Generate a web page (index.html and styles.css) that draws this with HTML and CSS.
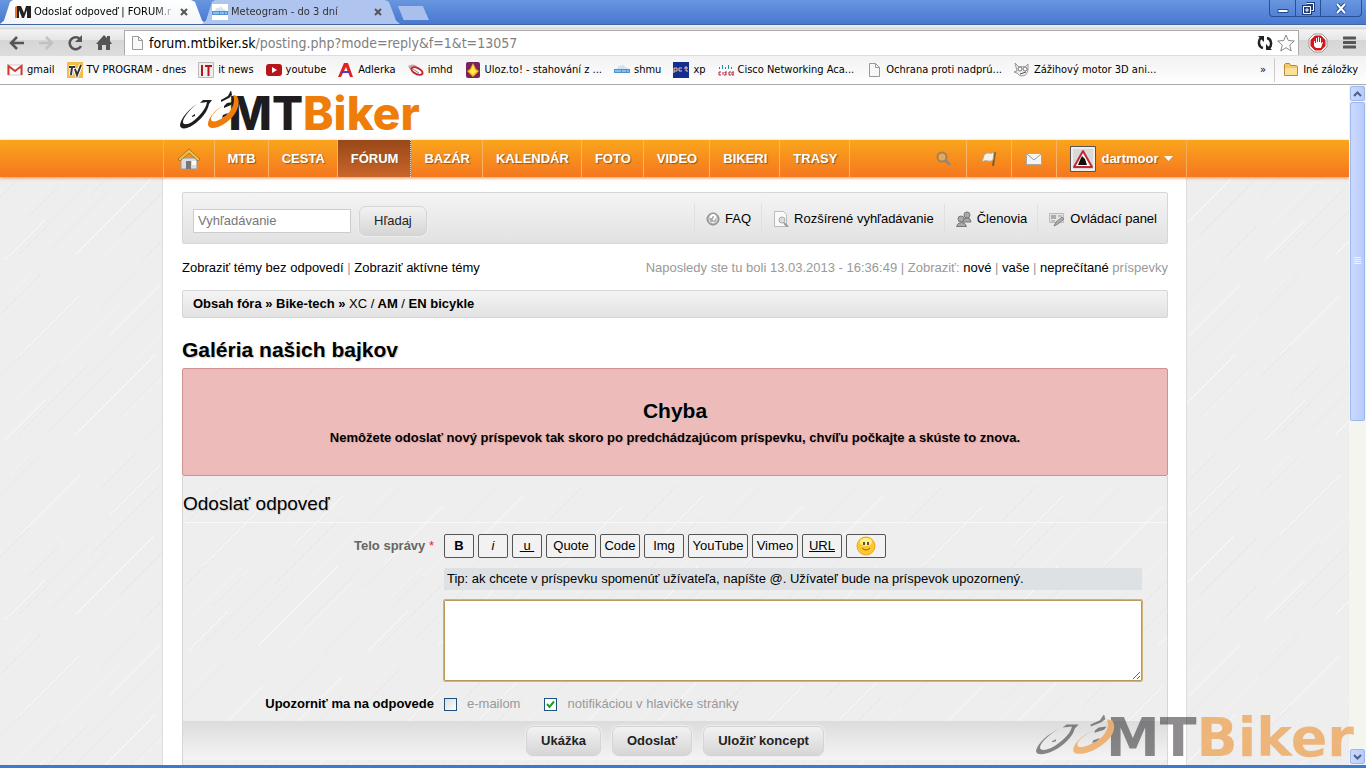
FILE: index.html
```
<!DOCTYPE html>
<html lang="sk">

<head>
    <meta charset="UTF-8">
    <meta name="viewport" content="width=device-width, initial-scale=1.0">
    <title>Odoslať odpoveď | FORUM.mtbiker.sk</title>
    <link rel="stylesheet" href="styles.css">
</head>

<body>
    <!-- shared shapes -->
    <svg class="defs" width="0" height="0">
        <symbol id="bike" viewBox="0 0 60 40">
            <path class="dark" d="M17 13C9 18 1 27 0 34c0 5 7 4 13 0 8-5 15-14 16-21l3-4-9 0-3 3 7-1c-1 7-8 15-15 20-5 3-9 3-9 0 0-4 6-12 14-18z" />
            <path class="dark" d="M12 25l3-2 0 2-3 1zM41 9l7-4 3-6 1 5-3 3-8 4zM44 15l3-3 6-1-2 3-7 3zM43 24l5-2-2 3-4 2z" />
            <path class="accent" d="M43 15c-7 3-14 11-15 17-1 7 8 6 16 1C55 26 62 14 57 5l-4-1c3 7-1 16-9 22-7 5-13 6-13 2 0-3 5-9 12-13z" />
        </symbol>
        <symbol id="page" viewBox="0 0 16 16">
            <path d="M3.500 1.500h6l4 4v9h-10z" fill="#f8f8f8" stroke="#999" />
            <path d="M9.500 1.500v4h4" fill="none" stroke="#999" />
        </symbol>
        <symbol id="shmu" viewBox="0 0 16 16">
            <path d="M3 7q1-4 4-3 2-3 4 1 3 0 3 3z" fill="#cfe4f4" />
            <path d="M0 7h16v4H0z" fill="#4f93d4" />
            <path d="M1 9h2m1-1v2m2-2v2m2-1h2m1-1v2m2-1h2" stroke="#cfe4f4" />
        </symbol>
        <symbol id="close" viewBox="0 0 8 8">
            <path d="M1 1l6 6M7 1L1 7" stroke="#555" stroke-width="2" />
        </symbol>
    </svg>

    <div class="titlebar">
        <div class="tab active">
            <svg width="16" height="14" viewBox="0 0 16 14"><path d="M0 2l2-1 1 12H0z" fill="#e77b1c" /><path d="M2 1h4l3 7 2-7h5v12h-4V5l-3 8H7L4 5v8H2z" fill="#222" /></svg>
            <span class="tab-title">Odoslať odpoveď | FORUM.r</span>
            <button class="tab-close" aria-label="Zavrieť"><svg width="8" height="8"><use href="#close" /></svg></button>
        </div>
        <div class="tab">
            <svg class="white" width="16" height="16"><use href="#shmu" /></svg>
            <span class="tab-title">Meteogram - do 3 dní</span>
            <button class="tab-close" aria-label="Zavrieť"><svg width="8" height="8"><use href="#close" /></svg></button>
        </div>
        <button class="new-tab" aria-label="Nová karta"></button>
        <div class="window-buttons">
            <button aria-label="Minimalizovať"><svg width="12" height="12"><path d="M1 7.500h10v3H1z" fill="#fff" stroke="#24498f" /></svg></button>
            <button aria-label="Obnoviť"><svg width="13" height="13"><path d="M4.500 1.500h7v7h-2M1.500 4.500h7v7h-7zM4 7h2v2H4z" fill="none" stroke="#203f7d" stroke-width="3" /><path d="M4.500 1.500h7v7h-2M1.500 4.500h7v7h-7zM4 7h2v2H4z" fill="none" stroke="#fff" /></svg></button>
            <button class="wide" aria-label="Zavrieť"><svg width="12" height="11"><path d="M2 1l8 9M10 1L2 10" stroke="#24498f" stroke-width="4" /><path d="M2 1l8 9M10 1L2 10" stroke="#fff" stroke-width="2" /></svg></button>
        </div>
    </div>

    <div class="toolbar">
        <button aria-label="Späť"><svg width="16" height="14"><path d="M15 7H3M8 1L2 7l6 6" fill="none" stroke="#555" stroke-width="2.500" /></svg></button>
        <button aria-label="Dopredu"><svg width="16" height="14"><path d="M1 7h12M8 1l6 6-6 6" fill="none" stroke="#c2c2c2" stroke-width="2.500" /></svg></button>
        <button aria-label="Obnoviť"><svg width="16" height="16"><path d="M13 4a6 6 0 1 0 1 7" fill="none" stroke="#555" stroke-width="2.500" /><path d="M15 0v7H8z" fill="#555" /></svg></button>
        <button aria-label="Domov"><svg width="16" height="16"><path d="M8 0l3 3V1h3v5l2 3h-2v6h-4v-5H6v5H2V9H0z" fill="#555" /></svg></button>
        <div class="omnibox">
            <svg width="16" height="16"><use href="#page" /></svg>
            <a class="url" href="#"><span>forum.mtbiker.sk</span>/posting.php?mode=reply&amp;f=1&amp;t=13057</a>
            <svg width="16" height="16"><path d="M6 13C1 12 1 5 4 3M10 3c5 1 5 8 2 10" fill="none" stroke="#222" stroke-width="2.500" /><path d="M1 1h6v6zM15 15H9V9z" fill="#222" /></svg>
            <svg width="18" height="18"><path d="M9 1l2.300 5.500 6 .5-4.600 4 1.500 6L9 13.700 3.800 17l1.500-6L.7 7l6-.5z" fill="#fff" stroke="#888" /></svg>
        </div>
        <button class="adblock" aria-label="AdBlock"><svg width="20" height="20"><path d="M6 1h8l5 5v8l-5 5H6l-5-5V6z" fill="#fff" stroke="#999" /><path d="M7 2.500h6L17.500 7v6L13 17.500H7L2.500 13V7z" fill="#d5141c" /><path d="M6 8h1v2h1V5h1v4h1V4h1v5h1V5h1v6l1-2h1l-2 6H8l-2-2z" fill="#fff" /></svg></button>
        <button class="menu" aria-label="Menu"><svg width="13" height="13"><path d="M1 2h11M1 6.500h11M1 11h11" stroke="#555" stroke-width="3" stroke-linecap="round" /></svg></button>
    </div>

    <div class="bookmarks">
        <a href="#"><svg width="16" height="16"><path d="M1 3h14v10H1z" fill="#fff" stroke="#ccc" /><path d="M1.500 13V4L8 9l6.500-5v9" fill="none" stroke="#d33a2f" stroke-width="2" /></svg>gmail</a>
        <a href="#"><svg width="16" height="16"><path d="M0 0h16v16H0z" fill="#f2bd4a" /><path d="M2 5h6M5 5L4 13M8 7l2 6 4-10" fill="none" stroke="#fff" stroke-width="4" /><path d="M2 5h6M5 5L4 13M8 7l2 6 4-10" fill="none" stroke="#333" stroke-width="2" /></svg>TV PROGRAM - dnes</a>
        <a href="#"><svg width="16" height="16"><path d="M.5.5h15v15H.5z" fill="#eee" stroke="#bbb" /><path d="M4 3v11M7 4h7M10.500 4v10" stroke="#b5151d" stroke-width="2" /></svg>it news</a>
        <a href="#"><svg width="16" height="16"><rect y="2" width="16" height="12" rx="3" fill="#b8141b" /><path d="M6 5l5 3-5 3z" fill="#fff" /></svg>youtube</a>
        <a href="#"><svg width="16" height="16"><path d="M0 15L6 1h4l5 14h-3L8 5 3 15z" fill="#e42222" /><path d="M4 9h8v2H3z" fill="#4d3ccc" /></svg>Adlerka</a>
        <a href="#"><svg width="16" height="16"><path d="M0 4q5-3 9 0L2 8z" fill="#c9a9a5" /><ellipse cx="9" cy="9" rx="6" ry="3" transform="rotate(28 9 9)" fill="#fff" stroke="#c3272e" stroke-width="2" /><path d="M5 7l6 4" stroke="#888" /></svg>imhd</a>
        <a href="#"><svg width="16" height="16"><rect x="1" width="14" height="16" rx="2" fill="#77245d" /><path d="M8 1l3 6 3 2-6 6-6-6 3-2z" fill="#f6b318" /><path d="M8 3l2 5 2 1-4 4-4-4 2-1z" fill="#ffee45" /></svg>Uloz.to! - stahování z ...</a>
        <a href="#"><svg width="16" height="16"><use href="#shmu" /></svg>shmu</a>
        <a href="#"><svg width="16" height="16"><path d="M0 0h16v16H0z" fill="#102d91" /><path d="M1 11V6h3v3H1M9 6H6v3h3M11 6h4M13 4v5h2" fill="none" stroke="#f5c3a5" /></svg>xp</a>
        <a href="#"><svg width="16" height="16"><path d="M1.500 5v2M4.500 3v4M7.500 5v2M10.500 3v4M13.500 5v2" stroke="#258ba3" /><path d="M3 10H1v3h2M5 10v3M9 10H7v1h1v2H6M13 10h-2v3h2M14 10h2v3h-2z" fill="none" stroke="#b62035" /></svg>Cisco Networking Aca...</a>
        <a href="#"><svg width="16" height="16"><use href="#page" /></svg>Ochrana proti nadprú...</a>
        <a href="#"><svg width="16" height="16"><path d="M1 1l4 4q4-1 6 0l3-3v6q-1 6-6 6-3 0-5-3l-3-1 3-1z" fill="#eee" stroke="#999" /><circle cx="6" cy="7" r="2" fill="#fff" stroke="#777" /><circle cx="11" cy="7" r="2" fill="#fff" stroke="#777" /><path d="M6 12l6-2" stroke="#555" /></svg>Zážihový motor 3D ani...</a>
        <button class="more" aria-label="Ďalšie záložky">»</button>
        <a class="other" href="#"><svg width="16" height="16"><path d="M1.500 13.500v-11l1-1h4l1 2h6l1 1v9z" fill="#f9c866" stroke="#b98a35" /><path d="M2 6h12v7H2z" fill="#fce09a" /></svg>Iné záložky</a>
    </div>

    <div class="viewport">
        <div class="page">
            <header class="header">
                <a class="logo" href="#">
                    <svg width="60" height="40"><use href="#bike" /></svg>
                    <span class="logo-text">MT<b>Biker</b></span>
                </a>
            </header>

            <nav class="nav">
                <div class="nav-inner">
                    <a class="home" href="#" aria-label="Domov"><svg width="24" height="24"><path d="M4 11h16v11H4z" fill="#ddd" stroke="#999" /><path d="M9 14h5v8H9z" fill="#777" /><path d="M15 14h4v4h-4z" fill="#fff" /><path d="M1 12L12 2l11 10-2 2-9-8-9 8z" fill="#f5bd3f" stroke="#9b7a35" /></svg></a>
                    <a href="#">MTB</a>
                    <a href="#">CESTA</a>
                    <a class="selected" href="#">FÓRUM</a>
                    <a href="#">BAZÁR</a>
                    <a href="#">KALENDÁR</a>
                    <a href="#">FOTO</a>
                    <a href="#">VIDEO</a>
                    <a href="#">BIKERI</a>
                    <a href="#">TRASY</a>
                    <div class="nav-right">
                        <a href="#" aria-label="Hľadať"><svg width="16" height="16"><path d="M9 9l5 5" stroke="#8a8a8a" stroke-width="3" /><circle cx="6" cy="6" r="4.500" fill="#e2a860" stroke="#a3834f" stroke-width="2" /></svg></a>
                        <a href="#" aria-label="Upozornenia"><svg width="16" height="16"><path d="M14 1l-2 14" stroke="#8c5a1e" stroke-width="2" /><path d="M3 4q3-3 5-2t5-1l-1 8q-2 2-5 1T1 11z" fill="#f5f1e8" stroke="#baa27f" /></svg></a>
                        <a href="#" aria-label="Správy"><svg width="16" height="16"><path d="M.5 2.500h15v11H.5z" fill="#f4f4f4" stroke="#aaa" /><path d="M1 3l7 6 7-6" fill="none" stroke="#999" /></svg></a>
                        <a class="user" href="#">
                            <svg width="26" height="26"><path d="M.5.5h25v25H.5z" fill="#ddd" stroke="#555" /><path d="M2 2h22v22H2z" fill="#d9d9d9" stroke="#fff" /><path d="M13 5l9 16H4z" fill="#fff" stroke="#c22732" stroke-width="2" stroke-linejoin="round" /><path d="M8 19l2-5 2-4 3 3 2 6z" fill="#111" /></svg>
                            <span>dartmoor</span>
                            <svg width="9" height="5"><path d="M0 0h9L4.500 5z" fill="#fff" /></svg>
                        </a>
                    </div>
                </div>
            </nav>

            <main class="container">
                <div class="search-bar">
                    <form class="search">
                        <input type="text" placeholder="Vyhľadávanie" aria-label="Vyhľadávanie">
                        <button type="button" class="btn">Hľadaj</button>
                    </form>
                    <div class="links">
                        <a href="#"><svg width="14" height="14"><circle cx="7" cy="7" r="6" fill="#aaa" stroke="#888" /><circle cx="7" cy="7" r="4" fill="none" stroke="#ddd" /><path d="M5 6q0-3 2-3t2 2-2 3M7 10v1" fill="none" stroke="#fff" stroke-width="2" /></svg>FAQ</a>
                        <a href="#"><svg width="16" height="16"><path d="M1.500.5h9l3 3v12h-12z" fill="#fafafa" stroke="#bbb" /><circle cx="9" cy="9" r="3" fill="#ddd" stroke="#aaa" /><path d="M11 12l4 4" stroke="#999" stroke-width="2" /></svg>Rozšírené vyhľadávanie</a>
                        <a href="#"><svg width="16" height="16"><g fill="#aaa" stroke="#777"><circle cx="11" cy="4" r="3" /><path d="M6 11q1-4 5-4t4 4z" /><circle cx="5" cy="8" r="3" /><path d="M.5 15.500q1-4 5-4t5 4z" /></g></svg>Členovia</a>
                        <a href="#"><svg width="16" height="16"><path d="M.5 2.500h14v9H.5z" fill="#e4e4e4" stroke="#bbb" /><path d="M2 4h5v4H2z" fill="#aaa" /><path d="M9 5h4M2 10h4" stroke="#999" /><path d="M5 15l2-4 6-5 2 2-6 5z" fill="#aaa" stroke="#888" /></svg>Ovládací panel</a>
                    </div>
                </div>

                <div class="info">
                    <p><a href="#">Zobraziť témy bez odpovedí</a> | <a href="#">Zobraziť aktívne témy</a></p>
                    <p>Naposledy ste tu boli 13.03.2013 - 16:36:49 | Zobraziť: <a href="#">nové</a> | <a href="#">vaše</a> | <a href="#">neprečítané</a> príspevky</p>
                </div>

                <div class="breadcrumb"><a href="#">Obsah fóra</a> » <a href="#">Bike-tech</a> » <a href="#"><span>XC /</span> AM <span>/</span> EN bicykle</a></div>

                <h2>Galéria našich bajkov</h2>

                <div class="error">
                    <h2>Chyba</h2>
                    <p>Nemôžete odoslať nový príspevok tak skoro po predchádzajúcom príspevku, chvíľu počkajte a skúste to znova.</p>
                </div>

                <form class="post">
                    <h3>Odoslať odpoveď</h3>
                    <div class="fields">
                        <label class="message-label" for="message">Telo správy <em>*</em></label>
                        <div>
                            <div class="editor">
                                <button type="button"><b>B</b></button>
                                <button type="button"><i>i</i></button>
                                <button type="button"><u>&nbsp;u&nbsp;</u></button>
                                <button type="button" class="w50">Quote</button>
                                <button type="button" class="w40">Code</button>
                                <button type="button" class="w40">Img</button>
                                <button type="button" class="w60">YouTube</button>
                                <button type="button" class="w46">Vimeo</button>
                                <button type="button" class="w40"><u>URL</u></button>
                                <button type="button" class="w40" aria-label="Smajlíky"><svg width="20" height="20"><circle cx="10" cy="10" r="9" fill="#fdc82c" stroke="#eda51c" /><ellipse cx="10" cy="6" rx="6" ry="4" fill="#fff08c" /><path d="M8 6v3M12 6v3" stroke="#222" stroke-width="1.500" /><path d="M6 12q4 4 8 0" fill="none" stroke="#a35a0b" /></svg></button>
                            </div>
                            <p class="tip">Tip: ak chcete v príspevku spomenúť užívateľa, napíšte @. Užívateľ bude na príspevok upozornený.</p>
                            <textarea id="message"></textarea>
                        </div>
                        <span class="notify-label">Upozorniť ma na odpovede</span>
                        <div class="notify">
                            <label><input type="checkbox">e-mailom</label>
                            <label><input type="checkbox" checked>notifikáciou v hlavičke stránky</label>
                        </div>
                    </div>
                    <div class="actions">
                        <button type="button" class="btn">Ukážka</button>
                        <button type="button" class="btn">Odoslať</button>
                        <button type="button" class="btn">Uložiť koncept</button>
                    </div>
                </form>
            </main>
        </div>

        <div class="scrollbar">
            <div class="arrow"><svg width="9" height="6"><path d="M1 5l3.500-3.500L8 5" fill="none" stroke="#4d6185" stroke-width="2" /></svg></div>
            <div class="thumb"><svg width="7" height="8"><path d="M0 .5h7M0 2.500h7M0 4.500h7M0 6.500h7" stroke="#eef4fe" /></svg></div>
            <div class="arrow down"><svg width="9" height="6"><path d="M1 1l3.500 3.500L8 1" fill="none" stroke="#4d6185" stroke-width="2" /></svg></div>
        </div>

        <div class="watermark">
            <svg width="80" height="42" viewBox="0 0 60 40" preserveAspectRatio="none"><use href="#bike" /></svg>
            <span>MT<b>Biker</b></span>
        </div>
    </div>
</body>

</html>
```
FILE: styles.css
```
* {
    box-sizing: border-box;
}

body {
    display: flex;
    flex-direction: column;
    height: 100vh;
    margin: 0;
    overflow: hidden;
    border-bottom: 3px solid #3a7bd0;
    font: 13px/16px "Liberation Sans", Arial, sans-serif;
    color: #000;
}

a {
    color: inherit;
    text-decoration: none;
}

button {
    padding: 0;
    border: 0;
    background: none;
    font: inherit;
    color: inherit;
}

svg {
    flex: none;
}

p,
h2,
h3 {
    margin: 0;
}

.defs {
    position: absolute;
}

.dark {
    fill: #1f1c20;
}

.accent {
    fill: #ef7d0a;
}

/* browser window */
.titlebar,
.toolbar,
.bookmarks {
    flex: none;
    font-family: "DejaVu Sans Condensed", "DejaVu Sans", sans-serif;
    font-size: 11px;
}

.titlebar {
    display: flex;
    align-items: flex-end;
    height: 25px;
    border-bottom: 1px solid #44669f;
    background: linear-gradient(#6896df, #4878d1);
}

.tab {
    display: flex;
    align-items: center;
    width: 198px;
    height: 24px;
    margin-right: -4px;
    padding: 0 18px 0 10px;
    background: #afc4ee;
    clip-path: polygon(0 100%, 4px 85%, 10px 8%, 13px 0, 183px 0, 187px 8%, 194px 85%, 198px 100%);
    color: #333;
}

.tab.active {
    width: 206px;
    padding-left: 15px;
    background: linear-gradient(#fff, #f3f5f8);
    clip-path: polygon(0 100%, 4px 85%, 10px 8%, 13px 0, 191px 0, 195px 8%, 202px 85%, 206px 100%);
    color: #000;
}

.tab .white {
    background: #fff;
}

.tab-title {
    flex: 1;
    margin: 0 4px 0 3px;
    white-space: nowrap;
    mask-image: linear-gradient(90deg, #000 85%, transparent);
}

.tab-close {
    display: flex;
}

.new-tab {
    width: 31px;
    height: 14px;
    margin: 0 0 4px 2px;
    background: #a9c0ec;
    clip-path: polygon(0 0, 80% 0, 100% 100%, 18% 100%);
}

.window-buttons {
    display: flex;
    align-self: flex-start;
    height: 17px;
    margin: 0 4px 0 auto;
    border: 1px solid #294f9b;
    border-top: 0;
    border-radius: 0 0 4px 4px;
}

.window-buttons button {
    display: flex;
    justify-content: center;
    align-items: center;
    width: 25px;
}

.window-buttons button + button {
    border-left: 1px solid #294f9b;
}

.window-buttons .wide {
    width: 41px;
}

.toolbar {
    display: flex;
    align-items: center;
    height: 30px;
    padding: 5px 10px 0 9px;
    background: linear-gradient(#e9eef7 2px, #d2d2d2 3px, #f2f2f2 5px, #e6e6e6 50%, #d6d6d6 51%, #dcdcdc);
}

.toolbar button {
    display: flex;
    margin-right: 13px;
}

.omnibox {
    flex: 1;
    display: flex;
    align-items: center;
    gap: 4px;
    height: 25px;
    margin-left: -1px;
    padding: 0 3px 0 4px;
    border: 1px solid #aaa;
    border-bottom: 0;
    background: #fff;
}

.url {
    flex: 1;
    font-size: 14px;
    color: #808080;
}

.url span {
    color: #000;
}

.toolbar .adblock {
    margin: 0 13px 0 9px;
}

.toolbar .menu {
    margin: 0 0 0 2px;
}

.bookmarks {
    display: flex;
    align-items: center;
    gap: 12px;
    height: 30px;
    padding: 0 8px 0 7px;
    border-top: 1px solid #ddd;
    border-bottom: 1px solid #aaa;
    background: linear-gradient(#f2f2f2, #fff);
    white-space: nowrap;
}

.bookmarks a {
    display: flex;
    align-items: center;
    gap: 4px;
}

.more {
    margin-left: auto;
}

.bookmarks .other {
    height: 24px;
    margin-left: -4px;
    padding-left: 8px;
    border-left: 1px solid #ccc;
}

.viewport {
    position: relative;
    flex: 1;
    display: flex;
    min-height: 0;
}

.scrollbar {
    display: flex;
    flex-direction: column;
    width: 17px;
    padding: 1px 0 1px 1px;
    background: #f5f5ef;
}

.arrow,
.thumb {
    display: flex;
    justify-content: center;
    align-items: center;
    width: 15px;
    border: 1px solid #9db6ec;
    border-radius: 2px;
    background: linear-gradient(90deg, #cbd9fe, #b7cbfb);
}

.arrow {
    height: 15px;
}

.thumb {
    height: 47%;
    margin-top: 1px;
}

.down {
    margin-top: auto;
}

/* forum page */
.page,
.post {
    background: #eee url("data:image/svg+xml,%3Csvg xmlns='http://www.w3.org/2000/svg' width='180' height='180'%3E%3Cg fill='none'%3E%3Cpath d='M20 90l60-60M75 170l80-80M110 70l50-50M5 175l40-40' stroke='%23fafafa'/%3E%3Cpath d='M0 50l40-40M30 130l90-90M50 165l60-60M120 150l58-58M90 110l70-70M0 112l30-30M140 178l38-38M100 44l36-36M18 170l70-70' stroke='%23e7e7e7'/%3E%3Cpath d='M10 30l22-22M60 100l60-60M10 140l50-50M100 176l70-70M130 100l48-48' stroke='%23f4f4f4'/%3E%3C/g%3E%3C/svg%3E");
}

.page {
    flex: 1;
    display: flex;
    flex-direction: column;
    min-width: 0;
    overflow: hidden;
}

.header {
    flex: none;
    height: 55px;
    background: #fff;
}

.logo {
    display: flex;
    align-items: flex-start;
    max-width: 990px;
    margin: 0 auto;
    padding-top: 6px;
}

.logo svg,
.watermark svg {
    position: relative;
    z-index: 1;
    overflow: visible;
}

.logo-text {
    margin-left: -11px;
    font: 800 46px/44px Inter, "Liberation Sans", sans-serif;
    color: #1f1c20;
}

.logo-text b {
    font-weight: 800;
    color: #ef7d0a;
}

.nav {
    position: relative;
    flex: none;
    height: 37px;
    background: linear-gradient(#faa51c, #f5771f);
    box-shadow: 0 1px 3px #f08a4a;
    font-weight: bold;
    color: #fff;
    text-shadow: 1px 1px 1px #8a5a20;
}

.nav-inner {
    display: flex;
    height: 100%;
    max-width: 1024px;
    margin: 0 auto;
    border-left: 1px solid #f6ac58;
    border-right: 1px solid #f6ac58;
}

.nav a {
    display: flex;
    align-items: center;
    padding: 0 12px 0 13px;
    border-right: 1px solid #f9b565;
}

.nav .home {
    padding: 0 13px;
}

.nav .selected {
    background: linear-gradient(#984818, #c9652a);
    border-right: 1px dotted #e8d5c0;
}

.nav-right {
    display: flex;
    margin-left: auto;
}

.nav-right a {
    padding: 0 14px;
}

.nav-right .user {
    gap: 5px;
    padding: 0 13px;
    border-right: 0;
}

.container {
    flex: 1;
    width: 100%;
    max-width: 1025px;
    min-height: 0;
    margin: 0 auto;
    padding: 15px 18px 0 19px;
    border: solid #ddd;
    border-width: 0 1px;
    background: #fff;
}

.search-bar,
.breadcrumb {
    border: 1px solid #d6d6d6;
    border-radius: 2px;
    background: linear-gradient(#f4f4f4, #e2e2e2);
}

.search-bar {
    display: flex;
    justify-content: space-between;
    height: 52px;
    padding: 0 0 0 10px;
}

.search {
    display: flex;
    align-items: center;
    gap: 8px;
    padding-top: 5px;
}

.search input {
    width: 158px;
    height: 24px;
    padding: 0 4px;
    border: 1px solid #ccc;
    background: #fff;
    font: inherit;
}

.search input::placeholder {
    color: #777;
}

.btn {
    height: 30px;
    padding: 0 14px;
    border: 1px solid #d4d4d4;
    border-radius: 7px;
    background: linear-gradient(#f2f2f2, #d6d6d6);
    box-shadow: 0 0 1px 1px #eee;
    color: #222;
}

.links {
    display: flex;
    padding: 11px 0 10px;
}

.links a {
    display: flex;
    align-items: center;
    gap: 5px;
    padding: 0 10px 0 11px;
    border-left: 1px solid #e0e0e0;
}

.info {
    display: flex;
    justify-content: space-between;
    padding: 16px 0 14px;
    color: #999;
}

.info a {
    color: #000;
}

.breadcrumb {
    padding: 5px 10px;
    font-weight: bold;
}

.breadcrumb span {
    font-weight: normal;
}

h2 {
    font-size: 21px;
    line-height: 24px;
    text-shadow: 1px 1px 1px #ccc;
}

.container > h2 {
    margin: 20px 0 6px;
}

.error {
    height: 108px;
    padding-top: 30px;
    border: 1px solid #cf9292;
    border-radius: 2px;
    background: #eebbbb;
    text-align: center;
    font-weight: bold;
    text-shadow: 1px 1px 1px #d6a8a8;
}

.error p {
    margin-top: 7px;
}

.post {
    padding-bottom: 8px;
    border: solid #d6d6d6;
    border-width: 0 1px;
}

h3 {
    padding: 17px 0 7px;
    border-bottom: 1px solid #f8f8f8;
    font-size: 19px;
    font-weight: normal;
    line-height: 22px;
    text-shadow: 1px 1px 1px #ccc;
}

.fields {
    display: grid;
    grid-template-columns: 251px 1fr;
    gap: 15px 10px;
    padding: 11px 25px 9px 0;
}

.message-label,
.notify-label {
    text-align: right;
    font-weight: bold;
}

.message-label {
    padding-top: 4px;
    color: #666;
}

.message-label em {
    font-weight: normal;
    font-style: normal;
    color: #e22;
}

.editor {
    display: flex;
    gap: 4px;
}

.editor button {
    display: flex;
    justify-content: center;
    align-items: center;
    width: 30px;
    height: 24px;
    border: 1px solid #555;
    border-radius: 2px;
    background: #f2f2f2;
}

.editor .w40 {
    width: 40px;
}

.editor .w46 {
    width: 46px;
}

.editor .w50 {
    width: 50px;
}

.editor .w60 {
    width: 60px;
}

.tip {
    margin: 10px 0;
    padding: 3px;
    background: #dde1e4;
}

textarea {
    display: block;
    width: 100%;
    height: 81px;
    border: 1px solid #b99a5b;
    border-radius: 1px;
    outline: 1px solid #d3b375;
    background: #fff;
    font: inherit;
}

.notify {
    display: flex;
    gap: 24px;
    color: #999;
}

.notify label {
    display: flex;
    align-items: center;
    gap: 10px;
}

.notify input {
    appearance: none;
    width: 13px;
    height: 13px;
    margin: 0;
    border: 1px solid #1c5180;
    background: linear-gradient(135deg, #dcdcd7, #fff);
}

.notify input:checked {
    background: #fff url("data:image/svg+xml,%3Csvg xmlns='http://www.w3.org/2000/svg' width='11' height='11'%3E%3Cpath d='M2 5l2.500 3L9 2.500' fill='none' stroke='%2321a121' stroke-width='2'/%3E%3C/svg%3E");
}

.actions {
    display: flex;
    justify-content: center;
    gap: 11px;
    height: 39px;
    padding-top: 5px;
    background: linear-gradient(#dcdcdc, #f4f4f4);
    font-weight: bold;
}

.watermark {
    position: absolute;
    right: 12px;
    bottom: 4px;
    display: flex;
    align-items: flex-start;
    opacity: 0.5;
}

.watermark span {
    margin-left: -10px;
    font: bold 54px/46px "DejaVu Sans", sans-serif;
    color: #1f1c20;
}

.watermark b {
    color: #ef7d0a;
}
```
